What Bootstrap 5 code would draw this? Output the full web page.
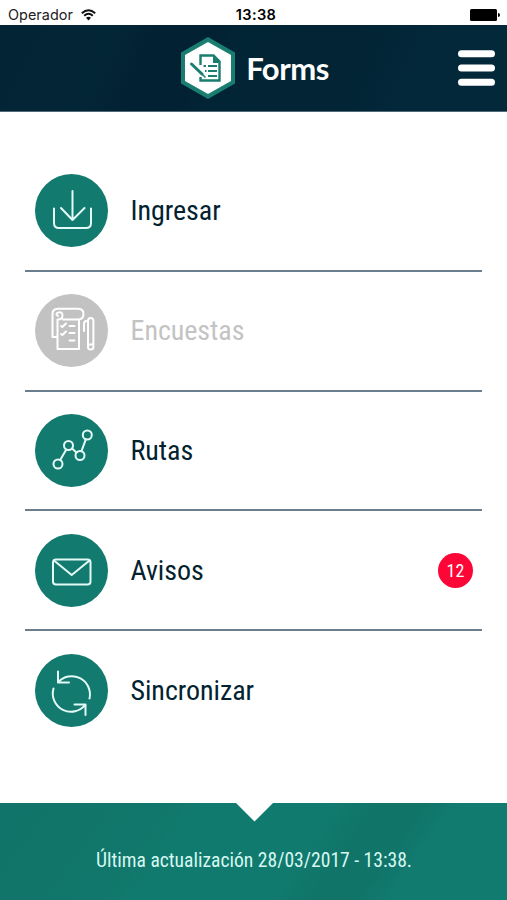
<!DOCTYPE html>
<html lang="es">
<head>
<meta charset="utf-8">
<meta name="viewport" content="width=device-width, initial-scale=1">
<title>Forms</title>
<link href="https://cdn.jsdelivr.net/npm/bootstrap@5.3.0/dist/css/bootstrap.min.css" rel="stylesheet">
<style>
  body { font-family: "Roboto Condensed", Roboto, sans-serif; font-stretch: 75%; color: #02222f; }
  .screen { height: 900px; }
  .status { height: 25px; display: grid; grid-template-columns: 1fr auto 1fr; padding: 2px 7px 0 8px; font: 14.4px/23px Inter, sans-serif; letter-spacing: .05px; color: #222; }
  .status-clock { font-weight: 600; font-size: 14.6px; letter-spacing: .35px; color: #000; padding: 2px 0 0 4px; }
  .topbar { height: 87px; background: linear-gradient(115deg, #032435 0, #032637 22%, #022132 30% 38%, #022536 46%, #022435 66%, #032839 80%); border-bottom: 1px solid #526977; display: grid; grid-template-columns: 1fr auto 1fr; padding: 0 11px; }
  .brand { font: 700 31px/1 Lato, sans-serif; color: #fff; gap: 10px; padding-left: 2px; letter-spacing: -.5px; }
  .menu { padding: 40px 25px 0; }
  .menu-row { height: 119.8px; border-bottom: 2px solid #6b7e8d; border-radius: 0; padding: 0 9px 0 10px; gap: 22.5px; color: inherit; text-decoration: none; }
  .menu-row:last-child { border-bottom-color: transparent; }
  .menu-row.off { color: #c3c3c3; }
  .disc { width: 73px; height: 73px; background: #127a6e; }
  .off .disc { background: #c2c2c2; }
  .disc svg { fill: none; stroke: #e4faf7; stroke-width: 2; stroke-linecap: round; stroke-linejoin: round; display: block; }
  .off .disc svg { stroke: #fff; }
  .label { font-size: 28px; line-height: 34px; padding-top: 1px; letter-spacing: -.04px; }
  .counter { width: 35px; height: 35px; background: #fb0637; color: #fff; font-size: 18px; padding-top: 1px; }
  .foot { height: 97px; background: linear-gradient(125deg, #11746a 0, #11766b 28%, #117a6e 36% 58%, #107469 66% 74%, #127b70 80%); color: #d7f8f1; font-size: 19.6px; padding: 19px 0 0 1px; }
  .notch { left: 50%; top: 0; margin-left: -18px; }
</style>
</head>
<body class="bg-white">
<div class="screen d-flex flex-column overflow-hidden">
  <div class="status align-items-center">
    <div class="d-flex align-items-center gap-2">
      <span>Operador</span>
      <svg width="15" height="12" viewBox="0 0 15 12" fill="none" stroke="#111" stroke-width="1.9"><path d="M.8 4.3Q7.5-2 14.200 4.300M3.200 6.700Q7.500 2.700 11.800 6.700"/><path d="M5 8.800Q7.500 6.800 10 8.800L7.500 11.500Z" fill="#111" stroke="none"/></svg>
    </div>
    <span class="status-clock">13:38</span>
    <svg class="ms-auto" width="30" height="12" viewBox="0 0 30 12"><rect width="27" height="12" rx="1.500"/><path d="M28 4q2 0 2 2t-2 2z"/></svg>
  </div>
  <header class="topbar align-items-center">
    <span></span>
    <div class="brand d-flex align-items-center">
      <svg width="56" height="62" viewBox="0 0 56 62">
        <path d="M28 0 55 15.500V46.500L28 62 1 46.500V15.500Z" fill="#197d70"/>
        <path d="M28 5 51 18V44L28 57 5 44V18Z" fill="#fff"/>
        <path d="M20.500 28V18.500H33.500L39.500 24.500V43.500H20.500V40" fill="none" stroke="#197d70" stroke-width="2.400"/>
        <path d="M33 18V26H40.500Z" fill="#197d70"/>
        <path d="M23.500 29H26M28 29H37M25 34H26.500M28 34H37M28 39H37" stroke="#197d70" stroke-width="2"/>
        <path d="M11.500 27 22 37" stroke="#197d70" stroke-width="3" stroke-linecap="round"/><path d="M22 37 25.500 40.500" stroke="#197d70" stroke-width="1.500"/>
      </svg>
      <span class="brand-text">Forms</span>
    </div>
    <svg class="ms-auto" width="39" height="36" viewBox="0 0 39 36" stroke="#fff" stroke-width="7" stroke-linecap="round"><path d="M4.500 3.800H34.500M4.500 18H34.500M4.500 32.200H34.500"/></svg>
  </header>
  <nav class="menu flex-grow-1">
    <a href="#" class="menu-row d-flex align-items-center">
      <span class="disc rounded-circle flex-shrink-0"><svg viewBox="0 0 73 73"><path d="M37.500 17V46M26 34 37.500 46 49.500 34M19 34.500V49Q19 54 24 54H51Q56 54 56 49V34.500"/></svg></span>
      <span class="label">Ingresar</span>
    </a>
    <a href="#" class="menu-row off d-flex align-items-center">
      <span class="disc rounded-circle flex-shrink-0"><svg viewBox="0 0 73 73"><path d="M22 43H17.500V20Q17.500 14.700 23 14.700H43Q48.500 14.700 48.500 20T43 25.500H28M22.500 25.500V55H44V25.500M22.500 25.500Q27.500 25.500 27.500 21.500T23.500 18.500T23 22"/><path d="M26 32 27.300 33 31 29.500M26 40 27.300 41 31 37.500M34.500 32H39.500M34.500 39H39.500M34.500 46.500H39.500"/><path d="M53 53V27Q53 24 55.700 24T58.400 27V53Q58.400 55.500 55.700 55.500T53 53ZM53 50.500H58M53 27H51.500Q49 27 49 30V37"/></svg></span>
      <span class="label">Encuestas</span>
    </a>
    <a href="#" class="menu-row d-flex align-items-center">
      <span class="disc rounded-circle flex-shrink-0"><svg viewBox="0 0 73 73"><circle cx="23" cy="50" r="4.500"/><circle cx="33.500" cy="31.500" r="4.500"/><circle cx="45" cy="41.500" r="4.500"/><circle cx="52.300" cy="21" r="4.500"/><path d="M25.200 46 31.300 35.500M37 34.500 41.500 38.500M46.500 37.200 50.800 25.300"/></svg></span>
      <span class="label">Rutas</span>
    </a>
    <a href="#" class="menu-row d-flex align-items-center">
      <span class="disc rounded-circle flex-shrink-0"><svg viewBox="0 0 73 73"><rect x="18" y="25.500" width="37.500" height="25" rx="3"/><path d="M19 26.500 36.700 41 54.500 26.500"/></svg></span>
      <span class="label">Avisos</span>
      <span class="counter rounded-circle d-flex align-items-center justify-content-center ms-auto">12</span>
    </a>
    <a href="#" class="menu-row d-flex align-items-center">
      <span class="disc rounded-circle flex-shrink-0"><svg viewBox="0 0 73 73"><path d="M23 17.500V28.500H34M23 28.500A18.200 18.200 0 0 1 54.500 44.500M50.500 61V50.500H39.500M50.500 50.500A18.200 18.200 0 0 1 18.500 34.500"/></svg></span>
      <span class="label">Sincronizar</span>
    </a>
  </nav>
  <footer class="foot position-relative d-flex align-items-center justify-content-center">
    <svg class="notch position-absolute" width="37" height="19" viewBox="0 0 37 19"><path d="M0 0H37L18.500 18.500Z" fill="#fff"/></svg>
    <span class="foot-text">Última actualización 28/03/2017 - 13:38.</span>
  </footer>
</div>
<script src="https://cdn.jsdelivr.net/npm/bootstrap@5.3.0/dist/js/bootstrap.bundle.min.js"></script>
</body>
</html>
